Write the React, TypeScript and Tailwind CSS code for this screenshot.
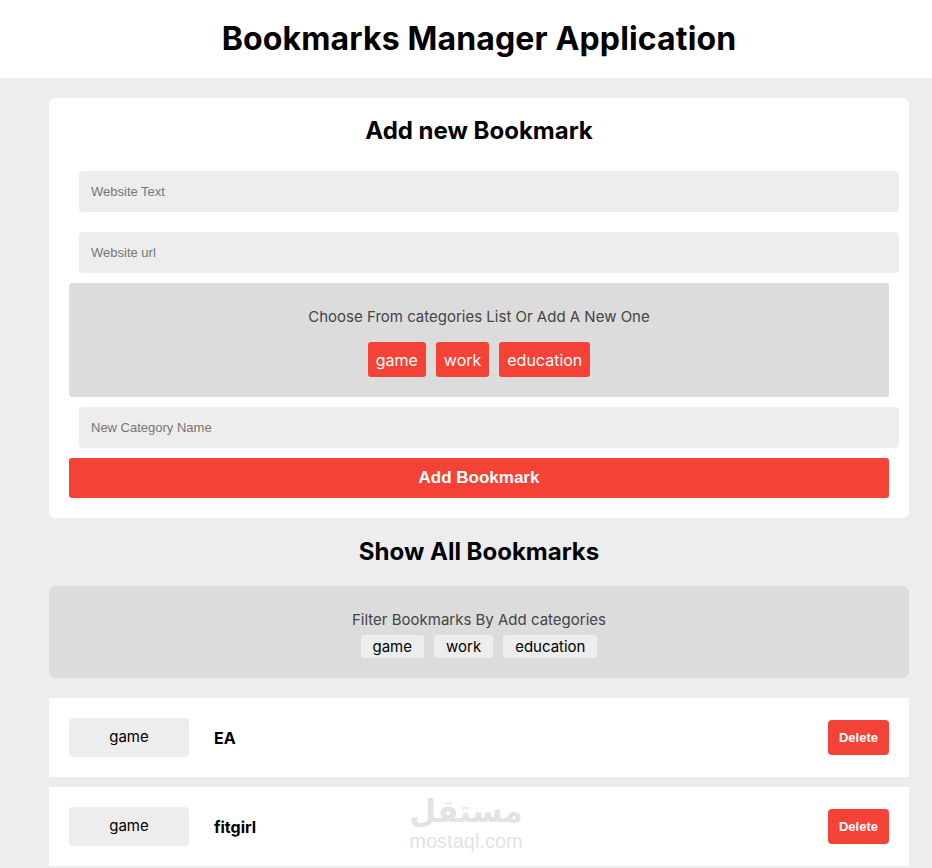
import { useState } from "react";

type Bookmark = { id: number; category: string; name: string };

const categories = ["game", "work", "education"];

const initial: Bookmark[] = [
  { id: 1, category: "game", name: "EA" },
  { id: 2, category: "game", name: "fitgirl" },
];

const rubik = "font-['Inter','Noto_Sans',sans-serif]";
const arial = "font-['Liberation_Sans',Arial,sans-serif]";

export default function App() {
  const [bookmarks, setBookmarks] = useState<Bookmark[]>(initial);
  const [selected, setSelected] = useState<string | null>(null);

  return (
    <div className={`min-h-screen bg-[#ededed] ${rubik}`}>
      <header className="flex h-[78px] items-center justify-center bg-white pl-[26px]">
        <h1 className="text-[32px] font-bold tracking-[0.15px] text-black">
          Bookmarks Manager Application
        </h1>
      </header>

      <main className="ml-[49px] w-[860px] pt-5">
        <section className="rounded-md bg-white px-5 pb-5 pt-[18px]">
          <h2 className="mb-[25px] text-center text-[24px] font-bold leading-[30px] text-black">
            Add new Bookmark
          </h2>
          <div className="flex flex-col">
            <input
              placeholder="Website Text"
              className={`ml-[10px] h-[41px] w-full rounded bg-[#ededed] px-3 text-[13px] text-black outline-none placeholder:text-[#757575] ${arial}`}
            />
            <input
              placeholder="Website url"
              className={`ml-[10px] mt-5 h-[41px] w-full rounded bg-[#ededed] px-3 text-[13px] text-black outline-none placeholder:text-[#757575] ${arial}`}
            />
            <div className="mt-[10px] flex h-[114px] flex-col items-center rounded-[3px] bg-[#dcdcdc] pt-6">
              <p className="text-[15px] leading-[20px] text-[#444]">
                Choose From categories List Or Add A New One
              </p>
              <div className="mt-[15px] flex gap-[10px]">
                {categories.map((c) => (
                  <button
                    key={c}
                    onClick={() => setSelected(c)}
                    className={`h-[35px] rounded-[3px] bg-[#f44336] px-2 text-[16px] text-white ${
                      selected === c ? "ring-2 ring-black/20" : ""
                    }`}
                  >
                    {c}
                  </button>
                ))}
              </div>
            </div>
            <input
              placeholder="New Category Name"
              className={`ml-[10px] mt-[10px] h-[41px] w-full rounded bg-[#ededed] px-3 text-[13px] text-black outline-none placeholder:text-[#757575] ${arial}`}
            />
            <button
              className={`mt-[10px] h-10 w-full rounded-[3px] bg-[#f44336] text-[17px] font-bold text-white ${arial}`}
            >
              Add Bookmark
            </button>
          </div>
        </section>

        <h2 className="mt-[19px] text-center text-[24px] font-bold leading-[30px] text-black">
          Show All Bookmarks
        </h2>

        <div className="mt-[19px] flex h-[92px] flex-col items-center rounded-md bg-[#dcdcdc] pt-6">
          <p className="text-[15px] leading-[20px] text-[#444]">
            Filter Bookmarks By Add categories
          </p>
          <div className="mt-[5px] flex gap-[10px]">
            {categories.map((c) => (
              <button
                key={c}
                className="h-[23px] rounded-[3px] bg-[#ededed] px-3 text-[15px] leading-[23px] text-black"
              >
                {c}
              </button>
            ))}
          </div>
        </div>

        <div className="relative mt-5 flex flex-col gap-[10px]">
          {bookmarks.map((b) => (
            <div
              key={b.id}
              className="flex h-[79px] items-center bg-white px-5"
            >
              <span className="flex h-[39px] w-[120px] items-center justify-center rounded bg-[#ededed] text-[15px] text-black">
                {b.category}
              </span>
              <span className="ml-[25px] text-[16px] font-bold text-black">
                {b.name}
              </span>
              <button
                onClick={() =>
                  setBookmarks((all) => all.filter((x) => x.id !== b.id))
                }
                className={`ml-auto h-[35px] w-[61px] rounded bg-[#f44336] text-[13px] font-bold text-white ${arial}`}
              >
                Delete
              </button>
            </div>
          ))}
          <div className="pointer-events-none absolute left-[360px] top-[96px] flex w-[114px] flex-col items-center text-[#e3e3e3]">
            <span className="font-['DejaVu_Sans',sans-serif] text-[31px] font-bold leading-[34px]">
              مستقل
            </span>
            <span className={`mt-[3px] text-[20px] leading-[20px] ${arial}`}>
              mostaql.com
            </span>
          </div>
        </div>
      </main>
    </div>
  );
}
